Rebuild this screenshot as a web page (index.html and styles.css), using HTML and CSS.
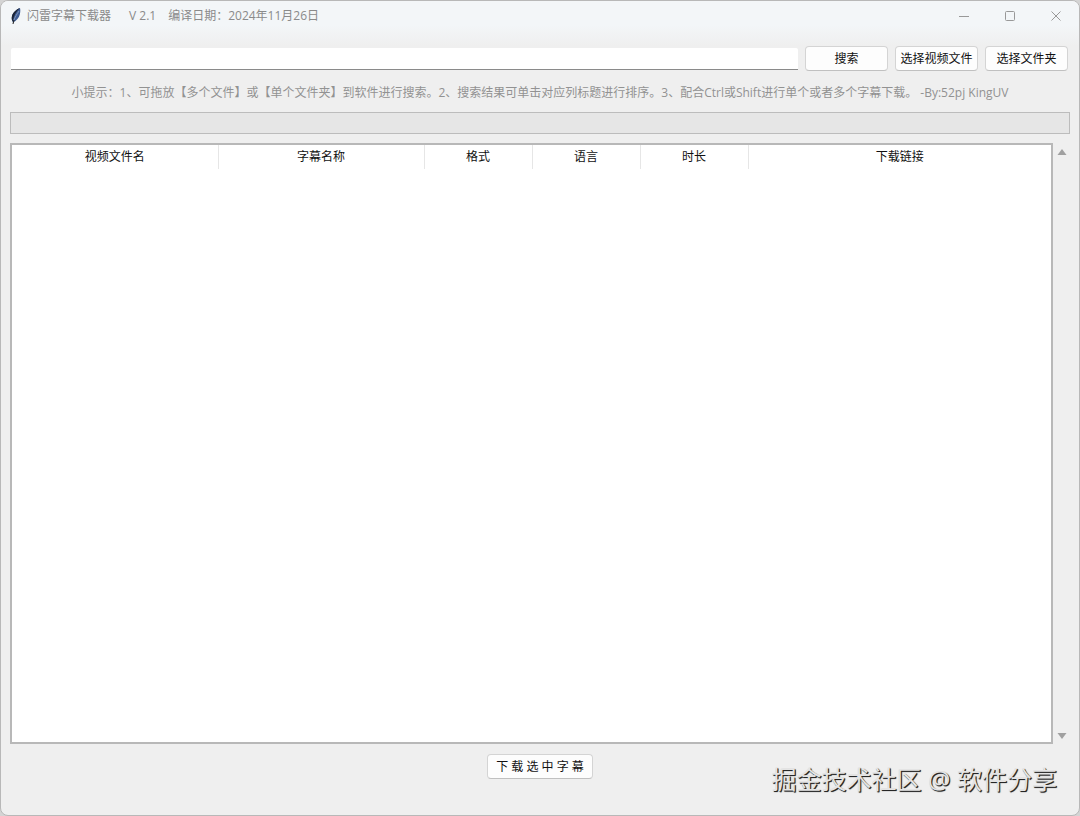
FILE: index.html
```html
<!DOCTYPE html>
<html lang="zh-CN">
    <head>
        <meta charset="utf-8">
        <title>闪雷字幕下载器</title>
        <link rel="stylesheet" href="styles.css">
    </head>
    <body>
        <div class="window">
            <header class="titlebar">
                <svg class="logo" width="12" height="18" viewBox="0 0 12 18">
                    <path d="M10 1C7 2 3 5 2 9c-.6 2.400-.2 4.400 1 6.500C6.500 13.500 9 11 9.800 7.500 10.400 5 10.500 3 10 1z" fill="#3d5c94"/>
                    <path d="M10 1C7 2 3 5 2 9c-.6 2.400-.2 4.400 1 5.500C3.500 9 6 4.500 10 1z" fill="#1d2638"/>
                    <path d="M9 4C7 7 5 10 4 13" fill="none" stroke="#8195b8" stroke-width="1"/>
                    <path d="M4 13 3 17" fill="none" stroke="#222" stroke-width="1"/>
                </svg>
                <span class="name">闪雷字幕下载器</span>
                <span class="version">V 2.1</span>
                <span class="date">编译日期：2024年11月26日</span>
                <div class="controls">
                    <button class="control" aria-label="最小化">
                        <svg width="12" height="12" viewBox="0 0 12 12"><path d="M1 6.500h10"/></svg>
                    </button>
                    <button class="control" aria-label="最大化">
                        <svg width="12" height="12" viewBox="0 0 12 12"><rect x="1.500" y="1.500" width="9" height="9" rx="1"/></svg>
                    </button>
                    <button class="control" aria-label="关闭">
                        <svg width="12" height="12" viewBox="0 0 12 12"><path d="M1.500 1.500l9 9M10.500 1.500l-9 9"/></svg>
                    </button>
                </div>
            </header>
            <main class="content">
                <form class="search" onsubmit="return false">
                    <input type="text" class="keyword" aria-label="搜索">
                    <button class="button">搜索</button>
                    <button type="button" class="button">选择视频文件</button>
                    <button type="button" class="button">选择文件夹</button>
                </form>
                <p class="tip">小提示：1、可拖放【多个文件】或【单个文件夹】到软件进行搜索。2、搜索结果可单击对应列标题进行排序。3、配合Ctrl或Shift进行单个或者多个字幕下载。 -By:52pj KingUV</p>
                <progress class="progress" value="0" max="100" aria-label="下载进度"></progress>
                <div class="results">
                    <div class="list">
                        <table>
                            <colgroup>
                                <col class="wide"><col class="wide"><col class="narrow"><col class="narrow"><col class="narrow"><col>
                            </colgroup>
                            <thead>
                                <tr>
                                    <th>视频文件名</th>
                                    <th>字幕名称</th>
                                    <th>格式</th>
                                    <th>语言</th>
                                    <th>时长</th>
                                    <th>下载链接</th>
                                </tr>
                            </thead>
                            <tbody></tbody>
                        </table>
                    </div>
                    <div class="scrollbar">
                        <svg width="10" height="8" viewBox="0 0 10 8"><path d="M5 1 9.500 7h-9z"/></svg>
                        <svg width="10" height="8" viewBox="0 0 10 8"><path d="M5 7 .5 1h9z"/></svg>
                    </div>
                </div>
            </main>
            <footer class="footer">
                <button class="button download">下 载 选 中 字 幕</button>
            </footer>
            <div class="watermark">掘金技术社区 @ 软件分享</div>
        </div>
    </body>
</html>
```

FILE: styles.css
```css
* {
    box-sizing: border-box;
}

body {
    margin: 0;
    background: #d4d4d4;
    font-family: "Open Sans", "Noto Sans CJK SC", sans-serif;
    font-size: 12px;
    line-height: 16px;
    color: #222;
}

button, input {
    font: inherit;
    color: inherit;
}

.window {
    position: relative;
    display: flex;
    flex-direction: column;
    min-height: 100vh;
    border: 1px solid #b8b8b8;
    border-radius: 8px;
    background: #efefef;
    overflow: hidden;
}

.titlebar {
    display: flex;
    align-items: center;
    height: 45px;
    padding: 0 0 16px 9px;
    background: linear-gradient(#f3f6f8 24px, #efefef);
    color: #8a8a8a;
}

.logo {
    margin-right: 5px;
}

.version {
    margin-left: 18px;
}

.date {
    margin-left: 12px;
}

.controls {
    display: flex;
    margin-left: auto;
}

.control {
    display: flex;
    align-items: center;
    justify-content: center;
    width: 46px;
    height: 28px;
    padding: 0;
    border: 0;
    background: none;
}

.control svg {
    fill: none;
    stroke: #999;
}

.content {
    flex: 1;
    display: flex;
    flex-direction: column;
    padding: 0 9px;
}

.search {
    display: flex;
    align-items: center;
    gap: 7px;
    padding: 0 2px 0 1px;
}

.keyword {
    flex: 1;
    min-width: 0;
    height: 22px;
    border: 0;
    border-bottom: 1px solid #8a8a8a;
    border-radius: 2px 2px 0 0;
    background: #fff;
    outline: none;
}

.button {
    width: 83px;
    height: 25px;
    padding: 0;
    border: 1px solid #d4d4d4;
    border-bottom-color: #c0c0c0;
    border-radius: 4px;
    background: #fdfdfd;
    color: #111;
    white-space: nowrap;
}

.tip {
    margin: 14px 0 11px;
    color: #929292;
    text-align: center;
}

.progress {
    appearance: none;
    display: block;
    width: 100%;
    height: 22px;
    border: 1px solid #bcbcbc;
    background: #e6e6e6;
}

.progress::-webkit-progress-bar {
    background: #e6e6e6;
}

.progress::-webkit-progress-value {
    background: #06b025;
}

.results {
    flex: 1;
    display: flex;
    margin-top: 9px;
}

.list {
    flex: 1;
    border: 2px solid #b8b8b8;
    background: #fff;
}

table {
    width: 100%;
    table-layout: fixed;
    border-collapse: collapse;
}

.wide {
    width: 206px;
}

.narrow {
    width: 108px;
}

th {
    height: 24px;
    padding: 0;
    border-right: 1px solid #e6e6e6;
    font-weight: normal;
    color: #111;
}

th:last-child {
    border-right: 0;
}

.scrollbar {
    display: flex;
    flex-direction: column;
    justify-content: space-between;
    width: 17px;
    padding: 5px 0 4px 4px;
    fill: #a0a0a0;
}

.footer {
    height: 71px;
    padding-top: 10px;
    text-align: center;
}

.download {
    width: 106px;
}

.watermark {
    position: absolute;
    right: 22px;
    bottom: 20px;
    font-size: 25px;
    line-height: 32px;
    color: #e4e4e4;
    text-shadow: 1px 1px 1px #222, 1px 1px 0 #444;
}
```
